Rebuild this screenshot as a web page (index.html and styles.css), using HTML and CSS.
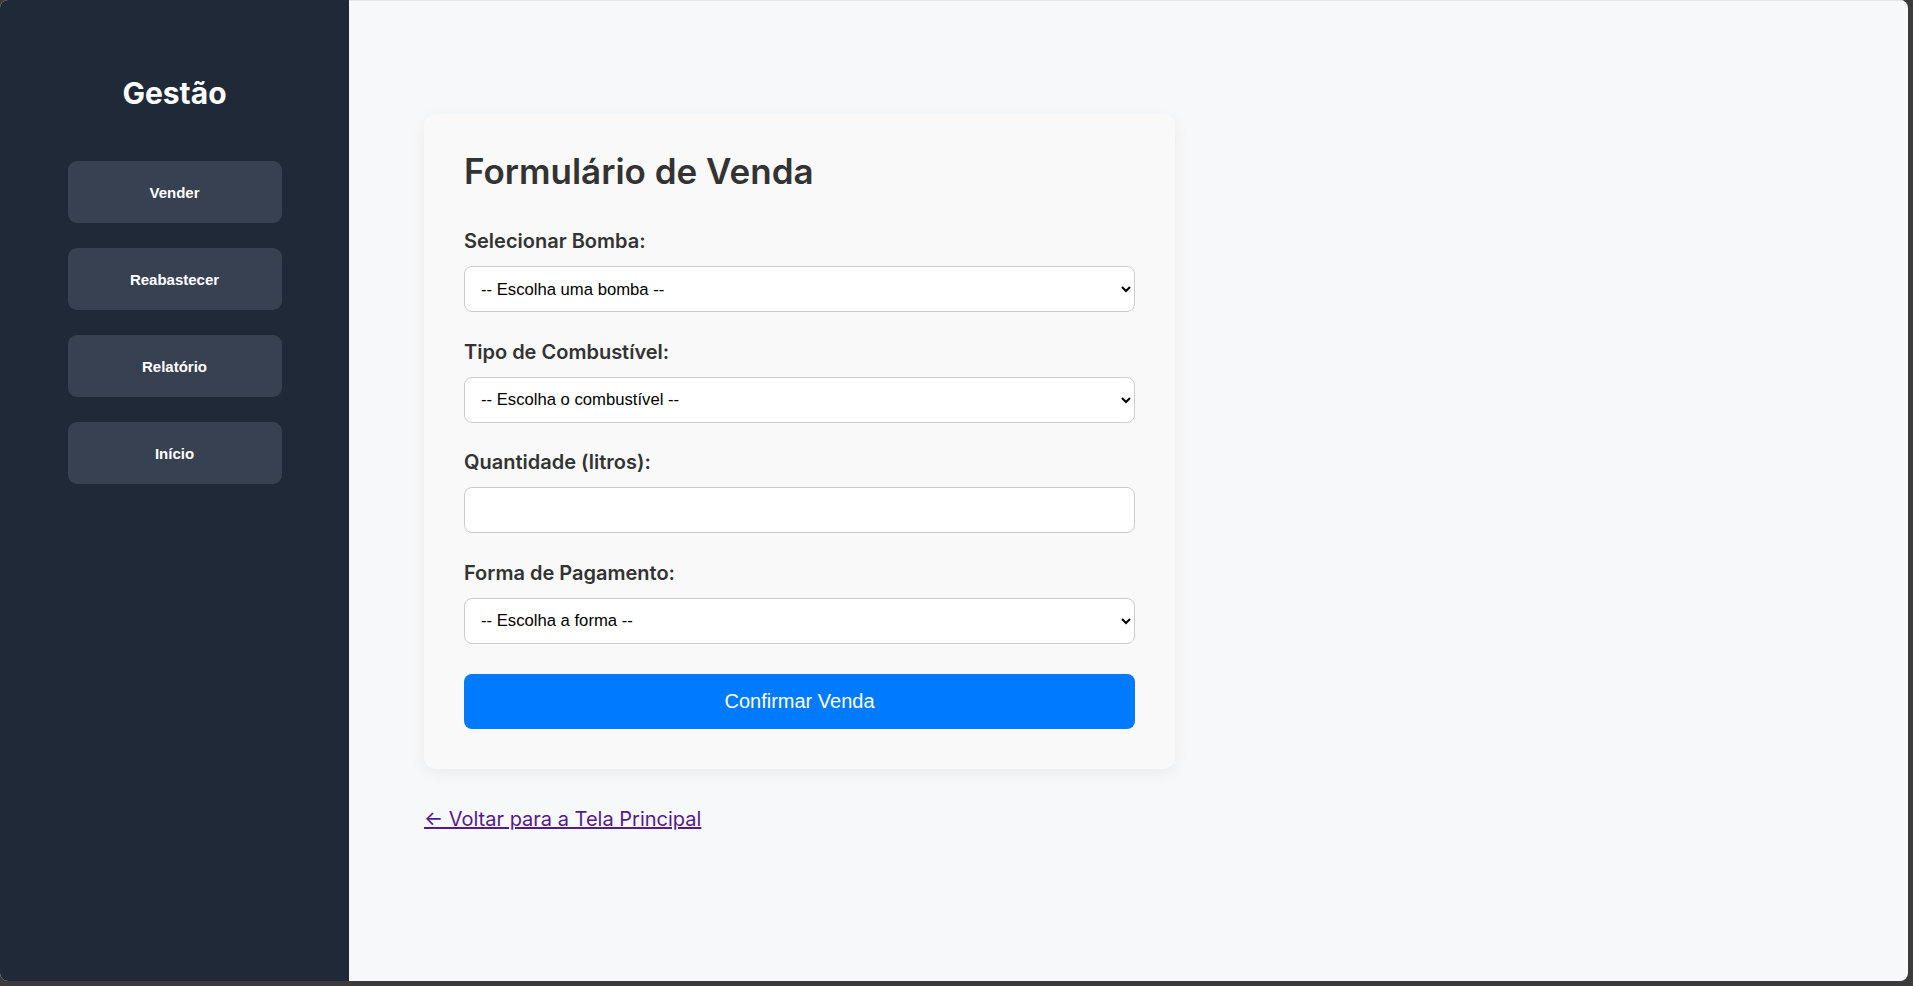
FILE: index.html
```html
<!DOCTYPE html>
<html lang="pt-BR">
<head>
<meta charset="utf-8">
<title>Formulário de Venda</title>
<link rel="stylesheet" href="styles.css">
</head>
<body>
<div class="window">
  <aside class="sidebar">
    <h1 class="brand">Gestão</h1>
    <nav class="nav">
      <button class="nav-btn">Vender</button>
      <button class="nav-btn">Reabastecer</button>
      <button class="nav-btn">Relatório</button>
      <button class="nav-btn">Início</button>
    </nav>
  </aside>
  <main class="main">
    <section class="card">
      <h2 class="card-title">Formulário de Venda</h2>
      <form class="form">
        <div class="group">
          <label class="label" for="bomba">Selecionar Bomba:</label>
          <select class="field" id="bomba"><option>-- Escolha uma bomba --</option></select>
        </div>
        <div class="group">
          <label class="label" for="comb">Tipo de Combustível:</label>
          <select class="field" id="comb"><option>-- Escolha o combustível --</option></select>
        </div>
        <div class="group">
          <label class="label" for="qtd">Quantidade (litros):</label>
          <input class="field" id="qtd" type="text">
        </div>
        <div class="group">
          <label class="label" for="pag">Forma de Pagamento:</label>
          <select class="field" id="pag"><option>-- Escolha a forma --</option></select>
        </div>
        <button type="button" class="submit">Confirmar Venda</button>
      </form>
    </section>
    <a class="back" href="#">← Voltar para a Tela Principal</a>
  </main>
</div>
</body>
</html>
```

FILE: styles.css
```css
html {
  background: #3b3b3b;
}
body {
  margin: 0;
  background: #3b3b3b;
  font-family: Inter, "Noto Sans", sans-serif;
}
.window {
  width: 1908px;
  height: 981px;
  display: flex;
  border-radius: 8px;
  overflow: hidden;
  background: #f7f8fa;
}
.sidebar {
  width: 349px;
  flex: none;
  background: #1f2937;
  display: flex;
  flex-direction: column;
  align-items: center;
  padding-top: 75px;
  box-sizing: border-box;
}
.brand {
  margin: 0;
  color: #ffffff;
  font-size: 30px;
  line-height: 36px;
  font-weight: 700;
}
.nav {
  margin-top: 50px;
  display: flex;
  flex-direction: column;
  gap: 25px;
}
.nav-btn {
  width: 214px;
  height: 62px;
  border: 0;
  border-radius: 9px;
  background: #374151;
  color: #ffffff;
  font-family: "Liberation Sans", Arial, sans-serif;
  font-size: 15px;
  font-weight: 700;
}
.main {
  flex: 1;
  padding: 113px 75px 0;
  box-sizing: border-box;
  border-top: 1px solid #e4e5e7;
}
.card {
  width: 751px;
  box-sizing: border-box;
  background: #f9f9f9;
  border-radius: 12px;
  box-shadow: 0 4px 16px rgba(0, 0, 0, 0.06);
  padding: 36px 40px 40px;
}
.card-title {
  margin: 0 0 37px;
  color: #333333;
  font-size: 35px;
  line-height: 42px;
  font-weight: 600;
}
.form {
  display: flex;
  flex-direction: column;
}
.group {
  display: flex;
  flex-direction: column;
  margin-bottom: 27.5px;
}
.group:last-of-type {
  margin-bottom: 30px;
}
.label {
  color: #333333;
  font-size: 20px;
  line-height: 24px;
  font-weight: 600;
  margin-bottom: 13px;
}
.field {
  height: 46px;
  box-sizing: border-box;
  border: 1px solid #cccccc;
  border-radius: 8px;
  background: #ffffff;
  padding: 0 12px;
  font-family: "Liberation Sans", Arial, sans-serif;
  font-size: 16.67px;
  color: #000000;
}
.submit {
  height: 55px;
  border: 0;
  border-radius: 8px;
  background: #007bff;
  color: #ffffff;
  font-family: "Liberation Sans", Arial, sans-serif;
  font-size: 20px;
}
.back {
  display: inline-block;
  margin-top: 38px;
  color: #551a8b;
  font-size: 20px;
  line-height: 24px;
}
```
